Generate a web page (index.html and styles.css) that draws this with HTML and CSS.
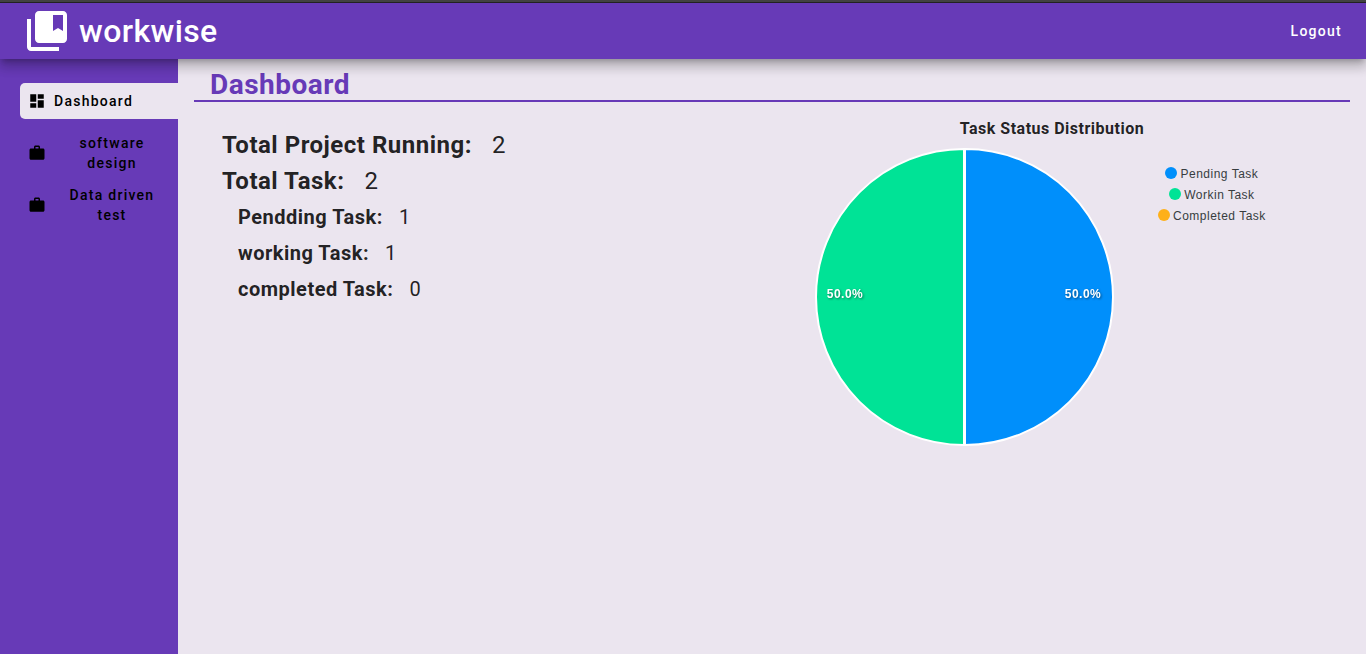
FILE: index.html
```html
<!DOCTYPE html>
<html lang="en">
<head>
<meta charset="utf-8">
<title>workwise</title>
<meta name="viewport" content="width=device-width, initial-scale=1">
<link rel="stylesheet" href="styles.css">
</head>
<body>
<header class="toolbar">
  <div class="brand">
    <svg class="brand-icon" viewBox="0 0 24 24" aria-hidden="true"><path d="M4 6H2v14c0 1.100.9 2 2 2h14v-2H4V6z"/><path fill-rule="evenodd" d="M20 2H8c-1.100 0-2 .9-2 2v12c0 1.100.9 2 2 2h12c1.100 0 2-.9 2-2V4c0-1.100-.9-2-2-2zm0 10l-2.500-1.500L15 12V4h5v8z"/></svg>
    <span class="brand-name">workwise</span>
  </div>
  <button class="logout" type="button">Logout</button>
</header>
<div class="shell">
  <nav class="sidebar">
    <a class="nav-item active" href="#dashboard">
      <svg class="nav-icon" viewBox="0 0 24 24" aria-hidden="true"><path d="M3 13h8V3H3v10zm0 8h8v-6H3v6zm10 0h8V11h-8v10zm0-18v6h8V3h-8z"/></svg>
      <span>Dashboard</span>
    </a>
    <a class="nav-item" href="#software-design">
      <svg class="nav-icon" viewBox="0 0 24 24" aria-hidden="true"><path fill-rule="evenodd" d="M20 6h-4V4c0-1.110-.89-2-2-2h-4c-1.110 0-2 .89-2 2v2H4c-1.110 0-2 .89-2 2v11c0 1.110.89 2 2 2h16c1.110 0 2-.89 2-2V8c0-1.110-.89-2-2-2zm-6 0h-4V4h4v2z"/></svg>
      <span class="nav-label">software design</span>
    </a>
    <a class="nav-item" href="#data-driven-test">
      <svg class="nav-icon" viewBox="0 0 24 24" aria-hidden="true"><path fill-rule="evenodd" d="M20 6h-4V4c0-1.110-.89-2-2-2h-4c-1.110 0-2 .89-2 2v2H4c-1.110 0-2 .89-2 2v11c0 1.110.89 2 2 2h16c1.110 0 2-.89 2-2V8c0-1.110-.89-2-2-2zm-6 0h-4V4h4v2z"/></svg>
      <span class="nav-label">Data driven test</span>
    </a>
  </nav>
  <main class="content">
    <h1 class="page-title">Dashboard</h1>
    <div class="columns">
      <dl class="stats">
        <div class="stat"><dt>Total Project Running:</dt><dd>2</dd></div>
        <div class="stat"><dt>Total Task:</dt><dd>2</dd></div>
        <div class="stat sub"><dt>Pendding Task:</dt><dd>1</dd></div>
        <div class="stat sub"><dt>working Task:</dt><dd>1</dd></div>
        <div class="stat sub"><dt>completed Task:</dt><dd>0</dd></div>
      </dl>
      <section class="chart">
        <h2 class="chart-title">Task Status Distribution</h2>
        <div class="chart-body">
          <svg class="pie" viewBox="0 0 300 300" role="img" aria-label="Task status pie chart">
            <path class="slice pending" d="M150 150V2a148 148 0 0 1 0 296z"/>
            <path class="slice working" d="M149 150v148a148 148 0 0 1 0-296z"/>
            <text class="slice-label" x="268" y="151">50.0%</text>
            <text class="slice-label" x="30" y="151">50.0%</text>
          </svg>
          <ul class="legend">
            <li><span class="dot pending"></span>Pending Task</li>
            <li><span class="dot working"></span>Workin Task</li>
            <li><span class="dot completed"></span>Completed Task</li>
          </ul>
        </div>
      </section>
    </div>
  </main>
</div>
</body>
</html>
```
FILE: styles.css
```css
* { box-sizing: border-box; }

body {
  margin: 0;
  min-height: 100vh;
  display: flex;
  flex-direction: column;
  font-family: Roboto, sans-serif;
  font-size: 16px;
  letter-spacing: 0.03125em;
  color: rgba(0, 0, 0, 0.87);
  background: #ebe5ef;
}

.toolbar {
  position: relative;
  z-index: 1;
  display: flex;
  align-items: center;
  justify-content: space-between;
  height: 59px;
  padding: 0 24px 0 23px;
  border-top: 2px solid #424242;
  color: #fff;
  background: #673ab7;
  box-shadow: inset 0 1px #222, 0 5px 5px -3px rgba(0, 0, 0, 0.2), 0 8px 10px 1px rgba(0, 0, 0, 0.14), 0 3px 14px 2px rgba(0, 0, 0, 0.12);
}

.brand { display: flex; align-items: center; gap: 8px; }
.brand-icon { width: 48px; height: 48px; fill: #fff; }
.brand-name { font-size: 32px; font-weight: 500; line-height: 40px; letter-spacing: 0.0125em; }

.logout {
  padding: 0;
  border: 0;
  background: none;
  color: inherit;
  font: 500 14px/36px Roboto, sans-serif;
  letter-spacing: 0.09em;
}

.shell { flex: 1; display: flex; }

.sidebar {
  flex: none;
  width: 178px;
  padding: 24px 0 0 20px;
  display: flex;
  flex-direction: column;
  gap: 12px;
  background: #673ab7;
}

.nav-item {
  display: flex;
  align-items: center;
  gap: 8px;
  min-height: 36px;
  padding: 0 16px 0 8px;
  color: #000;
  font-size: 14px;
  font-weight: 500;
  line-height: 20px;
  letter-spacing: 0.09em;
  text-decoration: none;
}
.nav-item.active { border-radius: 5px 0 0 5px; margin-bottom: 2px; background: #ebe5ef; }
.nav-icon { flex: none; width: 18px; height: 18px; }
.nav-label { flex: 1; padding: 0 4px 0 12px; text-align: center; }

.content { flex: 1; padding: 11px 16px; }

.page-title {
  margin: 0;
  padding: 0 16px;
  border-bottom: 2px solid #673ab7;
  color: #673ab7;
  font-size: 28px;
  font-weight: 700;
  line-height: 30px;
}

.columns {
  display: grid;
  grid-template-columns: 1fr 1fr;
  gap: 20px;
  padding: 17px 28px;
}

.stats { margin: 8px 0 0; }
.stat { display: flex; gap: 20px; font-size: 24px; line-height: 36px; }
.stat.sub { gap: 16px; padding-left: 16px; font-size: 20px; }
.stat dt { font-weight: 700; }
.stat dd { margin: 0; font-weight: 400; }

.chart-title { margin: 0; font-size: 16px; font-weight: 700; line-height: 20px; text-align: center; }
.chart-body {
  display: flex;
  align-items: flex-start;
  gap: 43px;
  padding: 8px 0 0 33px;
  font-family: "Liberation Sans", Arial, sans-serif;
  font-size: 12px;
}

.pie { flex: none; width: 300px; height: 300px; }
.slice { stroke: #fff; stroke-width: 2px; }
.slice.pending { fill: #008ffb; }
.slice.working { fill: #00e396; }
.slice-label {
  fill: #fff;
  font-weight: 600;
  text-anchor: middle;
  filter: drop-shadow(1px 1px 1px rgba(0, 0, 0, 0.45));
}

.legend {
  margin: 0;
  padding: 17px 0 0;
  display: flex;
  flex-direction: column;
  align-items: center;
  list-style: none;
  color: #373d3f;
}
.legend li { display: flex; align-items: center; gap: 3px; line-height: 21px; }
.dot { width: 12px; height: 12px; margin-bottom: 4px; border-radius: 50%; }
.dot.pending { background: #008ffb; }
.dot.working { background: #00e396; }
.dot.completed { background: #feb019; }
```
